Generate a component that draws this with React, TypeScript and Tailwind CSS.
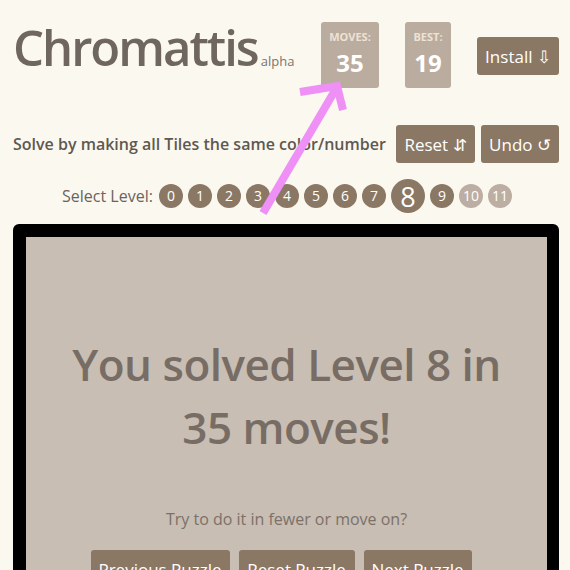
const font = { fontFamily: '"Open Sans", "Noto Sans", sans-serif' }

const levels = [0, 1, 2, 3, 4, 5, 6, 7, 8, 9, 10, 11]

function Stat({ label, value, width }: { label: string; value: string; width: string }) {
  return (
    <div className={`flex h-[66px] ${width} flex-col items-center rounded-[3px] bg-[#bbaca0] pt-[8px]`}>
      <div className="text-[11px] font-bold leading-[14px] text-[#eee2d4]">{label}</div>
      <div className="mt-[4px] text-[24px] font-bold leading-[30px] text-white">{value}</div>
    </div>
  )
}

function Btn({ children, className = '' }: { children: React.ReactNode; className?: string }) {
  return (
    <button
      className={`flex h-[38px] shrink-0 items-center justify-center rounded-[3px] bg-[#8b7864] text-[17px] leading-none text-white ${className}`}
    >
      {children}
    </button>
  )
}

export default function App() {
  return (
    <div className="relative h-[570px] w-[570px] overflow-hidden bg-[#fbf8f0]" style={font}>
      <div className="ml-[13px] w-[546px]">
        {/* header */}
        <div className="flex items-start pt-[22px]">
          <div className="flex items-baseline">
            <h1 className="text-[49px] font-semibold leading-[50px] tracking-[-2px] text-[#6f675f]">Chromattis</h1>
            <span className="ml-[3px] text-[13px] text-[#7d746c]">alpha</span>
          </div>
          <div className="ml-auto flex shrink-0 items-start gap-[26px]">
            <Stat label="MOVES:" value="35" width="w-[58px]" />
            <Stat label="BEST:" value="19" width="w-[46px]" />
            <Btn className="mt-[15px] w-[82px]">Install ⇩</Btn>
          </div>
        </div>

        {/* instructions */}
        <div className="mt-[37px] flex items-center">
          <div className="text-[16px] font-semibold text-[#5f5850]">Solve by making all Tiles the same color/number</div>
          <div className="ml-auto flex gap-[6px]">
            <Btn className="h-[37px] w-[79px]">Reset ⇵</Btn>
            <Btn className="h-[37px] w-[78px]">Undo ↺</Btn>
          </div>
        </div>

        {/* level select */}
        <div className="mt-[16px] flex items-center justify-center pl-[2px]">
          <span className="mr-[6px] text-[16px] text-[#6b635c]">Select Level:</span>
          <div className="flex items-center gap-[5px]">
            {levels.map(l =>
              l === 8 ? (
                <div
                  key={l}
                  className="flex h-[34px] w-[34px] items-center justify-center rounded-full bg-[#8b7864] text-[27px] leading-none text-white"
                >
                  {l}
                </div>
              ) : (
                <div
                  key={l}
                  className={`flex h-[24px] w-[24px] items-center justify-center rounded-full text-[14px] leading-none text-white ${
                    l > 9 ? 'bg-[#bcaea2]' : 'bg-[#8b7864]'
                  }`}
                >
                  {l}
                </div>
              )
            )}
          </div>
        </div>

        {/* board */}
        <div className="mt-[11px] h-[400px] rounded-[6px] bg-black p-[13px] pr-[12px]">
          <div className="flex h-full flex-col items-center bg-[#c8beb3] pt-[96px] text-center">
            <div className="text-[44px] font-semibold leading-[63px] tracking-[-0.5px] text-[#776d65]">
              You solved Level 8 in
              <br />
              35 moves!
            </div>
            <div className="mt-[49px] text-[16px] leading-[22px] text-[#7b7169]">Try to do it in fewer or move on?</div>
            <div className="mr-[11px] mt-[20px] flex gap-[9px]">
              <Btn className="w-[139px]">Previous Puzzle</Btn>
              <Btn className="w-[116px]">Reset Puzzle</Btn>
              <Btn className="w-[108px]">Next Puzzle</Btn>
            </div>
          </div>
        </div>
      </div>

      {/* annotation arrow */}
      <svg className="pointer-events-none absolute left-0 top-0" width="570" height="570">
        <g stroke="#ee90f5" strokeWidth="8" fill="none" strokeLinecap="butt" strokeLinejoin="miter">
          <path d="M263 213 L337 87" />
          <path d="M300 92 L337 86 L343 110" />
        </g>
      </svg>
    </div>
  )
}
